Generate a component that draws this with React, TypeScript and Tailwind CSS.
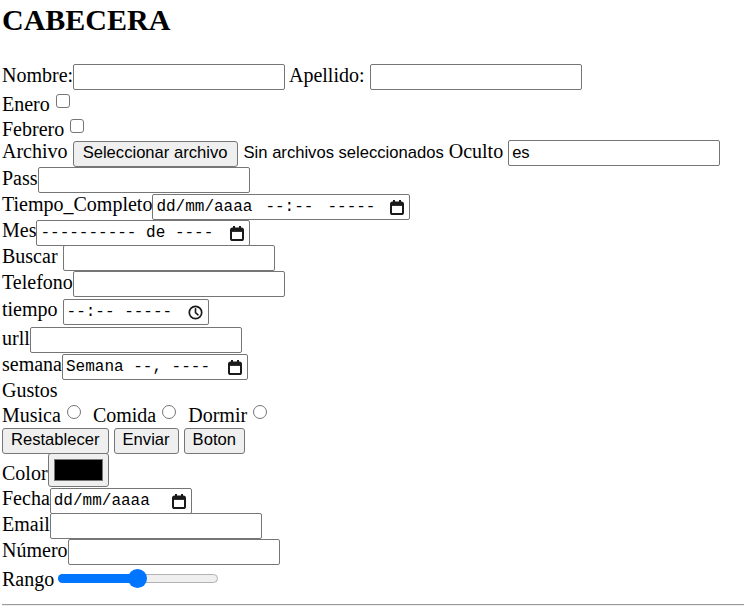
import React from 'react';

const txt =
  "inline-block align-baseline h-[26px] w-[212px] border border-[#767676] rounded-[2px] bg-white px-[3px] font-['Liberation_Sans',Arial,sans-serif] text-[16.6px] text-black outline-none";
const btn =
  "inline-block align-baseline h-[26px] border border-[#767676] rounded-[3px] bg-[#efefef] px-[8px] font-['Liberation_Sans',Arial,sans-serif] text-[16.6px] text-black leading-[22px]";
const field =
  "inline-flex align-baseline items-center h-[26px] border border-[#767676] rounded-[2px] bg-white pl-[3px] pr-[5px] font-['Liberation_Mono','Courier_New',monospace] text-[16px] text-black whitespace-pre";
const check =
  "inline-block align-baseline w-[14px] h-[14px] border border-[#767676] rounded-[3px] bg-white mt-[2px] mb-[3px]";
const radio =
  "inline-block align-baseline w-[14px] h-[14px] border border-[#767676] rounded-full bg-white mb-[3px]";

function CalendarIcon() {
  return (
    <svg width="14" height="15" viewBox="0 0 14 15" className="ml-auto shrink-0">
      <rect x="3" y="0" width="2" height="3" fill="#1a1a1a" />
      <rect x="9" y="0" width="2" height="3" fill="#1a1a1a" />
      <rect x="1" y="2.5" width="12" height="11.5" rx="1.6" fill="none" stroke="#1a1a1a" strokeWidth="2" />
      <rect x="1" y="2.5" width="12" height="3.4" fill="#1a1a1a" />
    </svg>
  );
}

function ClockIcon() {
  return (
    <svg width="15" height="15" viewBox="0 0 15 15" className="ml-auto shrink-0">
      <circle cx="7.5" cy="7.5" r="6.2" fill="none" stroke="#1a1a1a" strokeWidth="1.7" />
      <path d="M7.5 3.8V7.7L10 9.8" fill="none" stroke="#1a1a1a" strokeWidth="1.6" strokeLinecap="round" />
    </svg>
  );
}

export default function App() {
  return (
    <div className="bg-white min-h-[607px] w-[744px] overflow-hidden pl-[2px] pt-[3px] font-['Liberation_Serif','Times_New_Roman',serif] text-[20px] leading-[normal] text-black">
      <h1 className="h-[61px] text-[30px] font-bold leading-[normal]">CABECERA</h1>
      <form className="whitespace-nowrap">
        <div className="h-[28px]">
          Nombre:<input className={txt} type="text" /> Apellido: <input className={txt} type="text" />
        </div>
        <div className="h-[25px]">
          Enero <span className={`${check} ml-[1px]`} />
        </div>
        <div className="h-[23px]">
          Febrero <span className={`${check} ml-[1px]`} />
        </div>
        <div className="h-[27px]">
          Archivo{' '}
          <span className="inline-flex align-baseline items-baseline">
            <span className={`${btn} w-[165px] text-center px-0`}>Seleccionar archivo</span>
            <span className="ml-[6px] font-['Liberation_Sans',Arial,sans-serif] text-[16.6px]">Sin archivos seleccionados</span>
          </span>{' '}
          Oculto <input className={txt} type="text" defaultValue="es" />
        </div>
        <div className="h-[26px]">
          Pass<input className={txt} type="password" />
        </div>
        <div className="h-[26px]">
          Tiempo_Completo
          <span className={`${field} w-[258px]`}>
            <span>dd/mm/aaaa</span>
            <span className="ml-[13px]">--:--</span>
            <span className="ml-[14px]">-----</span>
            <CalendarIcon />
          </span>
        </div>
        <div className="h-[26px]">
          Mes
          <span className={`${field} w-[214px]`}>
            <span>---------- de ----</span>
            <CalendarIcon />
          </span>
        </div>
        <div className="h-[26px]">
          Buscar <input className={txt} type="search" />
        </div>
        <div className="h-[27px]">
          Telefono<input className={txt} type="tel" />
        </div>
        <div className="h-[29px]">
          tiempo{' '}
          <span className={`${field} w-[146px]`}>
            <span>--:-- -----</span>
            <ClockIcon />
          </span>
        </div>
        <div className="h-[26px]">
          urll<input className={txt} type="text" />
        </div>
        <div className="h-[26px]">
          semana
          <span className={`${field} w-[186px]`}>
            <span>Semana --, ----</span>
            <CalendarIcon />
          </span>
        </div>
        <div className="h-[25px]">Gustos</div>
        <div className="h-[23px]">
          Musica<span className={`${radio} ml-[6px] mr-[12px]`} />Comida<span className={`${radio} ml-[6px] mr-[12px]`} />Dormir
          <span className={`${radio} ml-[6px]`} />
        </div>
        <div className="h-[26px]">
          <span className={btn}>Restablecer</span> <span className={btn}>Enviar</span> <span className={btn}>Boton</span>
        </div>
        <div className="h-[34px]">
          Color
          <span className="inline-block align-[-7px] w-[61px] h-[34px] border border-[#767676] rounded-[3px] bg-[#efefef] px-[5px] py-[5px]">
            <span className="block w-[49px] h-[22px] bg-black border border-[#777]" />
          </span>
        </div>
        <div className="h-[26px]">
          Fecha
          <span className={`${field} w-[142px]`}>
            <span>dd/mm/aaaa</span>
            <CalendarIcon />
          </span>
        </div>
        <div className="h-[26px]">
          Email<input className={txt} type="email" />
        </div>
        <div className="h-[26px]">
          Número<input className={txt} type="number" />
        </div>
        <div className="h-[30px] pt-[3px]">
          Rango
          <span className="relative inline-block align-[-2px] w-[160px] h-[20px] ml-[4px]">
            <span className="absolute left-0 right-0 top-[6px] h-[9px] rounded-full border border-[#b2b2b2] bg-[#efefef]" />
            <span className="absolute left-0 w-[80px] top-[6px] h-[9px] rounded-l-full bg-[#0075ff]" />
            <span className="absolute left-[70px] top-[1px] w-[19px] h-[19px] rounded-full bg-[#0075ff]" />
          </span>
        </div>
        <hr className="mt-[9px] border-t border-b border-t-[#9a9a9a] border-b-[#eeeeee]" />
      </form>
    </div>
  );
}
